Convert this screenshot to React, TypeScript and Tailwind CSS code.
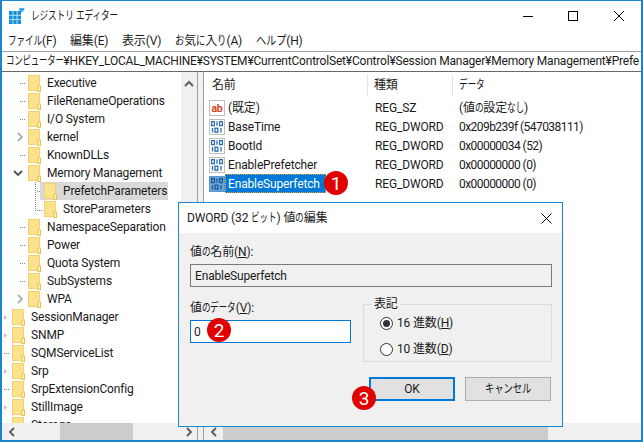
import React from "react";

const FONT = { fontFamily: 'Roboto, "Noto Sans CJK JP", sans-serif' };

type TreeRow = { name: string; level: 0 | 1 | 2; mark: "dots" | "closed" | "open" | "tiny" | "last" | "mid" };

const treeRows: TreeRow[] = [
  { name: "Executive", level: 1, mark: "dots" },
  { name: "FileRenameOperations", level: 1, mark: "dots" },
  { name: "I/O System", level: 1, mark: "dots" },
  { name: "kernel", level: 1, mark: "closed" },
  { name: "KnownDLLs", level: 1, mark: "dots" },
  { name: "Memory Management", level: 1, mark: "open" },
  { name: "PrefetchParameters", level: 2, mark: "mid" },
  { name: "StoreParameters", level: 2, mark: "last" },
  { name: "NamespaceSeparation", level: 1, mark: "dots" },
  { name: "Power", level: 1, mark: "dots" },
  { name: "Quota System", level: 1, mark: "dots" },
  { name: "SubSystems", level: 1, mark: "dots" },
  { name: "WPA", level: 1, mark: "closed" },
  { name: "SessionManager", level: 0, mark: "tiny" },
  { name: "SNMP", level: 0, mark: "tiny" },
  { name: "SQMServiceList", level: 0, mark: "dots" },
  { name: "Srp", level: 0, mark: "tiny" },
  { name: "SrpExtensionConfig", level: 0, mark: "dots" },
  { name: "StillImage", level: 0, mark: "tiny" },
  { name: "Storage", level: 0, mark: "tiny" },
];

const values = [
  { name: "既定", type: "REG_SZ", icon: "ab" },
  { name: "BaseTime", type: "REG_DWORD", data: "0x209b239f (547038111)", icon: "bin" },
  { name: "BootId", type: "REG_DWORD", data: "0x00000034 (52)", icon: "bin" },
  { name: "EnablePrefetcher", type: "REG_DWORD", data: "0x00000000 (0)", icon: "bin" },
  { name: "EnableSuperfetch", type: "REG_DWORD", data: "0x00000000 (0)", icon: "bin", selected: true },
];

// the reference's UI font has narrow kana, the installed CJK font doesn't
function Kana({ children, scale = 0.72 }: { children: string; scale?: number }) {
  const n = Array.from(children).length;
  return (
    <span
      className="inline-block origin-left whitespace-nowrap"
      style={{ transform: `scaleX(${scale})`, marginRight: -n * 12 * (1 - scale) }}
    >
      {children}
    </span>
  );
}

function Folder() {
  return (
    <svg width="13" height="17" viewBox="0 0 13 17" className="shrink-0">
      <rect x="0.5" y="0.5" width="11" height="15" fill="#fde28e" stroke="#f1d26c" />
      <rect x="10" y="11" width="2.5" height="5.5" fill="#fff3c4" stroke="#e8c24f" strokeWidth="1" />
    </svg>
  );
}

function Mark({ level, mark }: { level: number; mark: TreeRow["mark"] }) {
  const w = level === 0 ? 10 : level === 1 ? 26 : 42;
  const dot = "#808080";
  return (
    <svg width={w} height="18" className="shrink-0">
      {mark === "dots" &&
        [0, 2, 4].map((d) => <rect key={d} x={w - 8 + d} y="9" width="1" height="1" fill={dot} />)}
      {mark === "closed" && <path d={`M${w - 10} 5l4 4-4 4`} fill="none" stroke="#b0b0b0" strokeWidth="1.8" />}
      {mark === "open" && <path d={`M${w - 14} 7l4 4 4-4`} fill="none" stroke="#505050" strokeWidth="1.8" />}
      {mark === "tiny" && <path d={`M${w - 8} 7l3 2.5-3 2.5z`} fill="#c0c0c0" />}
      {(mark === "mid" || mark === "last") && (
        <g fill={dot}>
          {(mark === "mid" ? [0, 2, 4, 6, 8, 10, 12, 14, 16] : [0, 2, 4, 6, 8, 10]).map((y) => (
            <rect key={y} x={w - 9} y={y} width="1" height="1" />
          ))}
          {[2, 4, 6].map((d) => (
            <rect key={d} x={w - 9 + d} y={mark === "mid" ? 9 : 10} width="1" height="1" />
          ))}
        </g>
      )}
    </svg>
  );
}

function ValueIcon({ kind, selected }: { kind: string; selected?: boolean }) {
  if (kind === "ab") {
    return (
      <svg width="16" height="16" viewBox="0 0 16 16" className="shrink-0">
        <rect x="0.5" y="0.5" width="15" height="15" fill="#fff" stroke="#bdbdbd" />
        <text x="8" y="11.5" textAnchor="middle" fontSize="10.5" fontWeight="700" fill="#d6451f" style={FONT}>
          ab
        </text>
      </svg>
    );
  }
  const c = selected ? "#1b5c96" : "#2a6db0";
  return (
    <svg width="16" height="16" viewBox="0 0 16 16" className="shrink-0">
      <rect x="0.5" y="0.5" width="15" height="15" fill={selected ? "#6aa5dc" : "#fff"} stroke={selected ? "#5c96cc" : "#bdbdbd"} />
      <g fill="none" stroke={c} strokeWidth="1.3">
        <rect x="2.6" y="2.6" width="2.8" height="4" />
        <path d="M8 2.5v4.2" />
        <rect x="10.6" y="2.6" width="2.8" height="4" />
        <path d="M3.5 9v4.4" />
        <rect x="6" y="9.2" width="2.8" height="4" />
        <path d="M12 9v4.4" />
      </g>
    </svg>
  );
}

function Badge({ n, className }: { n: number; className: string }) {
  return (
    <span
      className={`absolute flex h-6 w-6 items-center justify-center rounded-full bg-[#e00000] text-[19px] leading-none text-white ${className}`}
    >
      {n}
    </span>
  );
}

function Chevron({ d }: { d: string }) {
  return (
    <svg width="10" height="10" viewBox="0 0 10 10" className="shrink-0">
      <path d={d} fill="none" stroke="#606060" strokeWidth="2" />
    </svg>
  );
}

function Radio({ checked, label, mnemonic }: { checked?: boolean; label: string; mnemonic: string }) {
  return (
    <div className="flex h-[26px] items-center gap-[4px]">
      <span className="flex h-[13px] w-[13px] items-center justify-center rounded-full border border-[#333] bg-white">
        {checked && <span className="h-[7px] w-[7px] rounded-full bg-[#333]" />}
      </span>
      <span>
        {label}(<span className="underline">{mnemonic}</span>)
      </span>
    </div>
  );
}

export default function App() {
  return (
    <div
      style={FONT}
      className="flex h-[442px] w-[643px] flex-col overflow-hidden border-x-2 border-t border-b-2 border-[#1a86d0] bg-white text-[12px] tracking-[-0.15px] text-[#1a1a1a]"
    >
      {/* title bar */}
      <div className="flex h-[30px] shrink-0 items-center pl-[7px]">
        <svg width="16" height="16" viewBox="0 0 16 16" className="shrink-0">
          <rect x="0" y="3" width="12" height="13" fill="#1490d8" />
          <path d="M4 3v13M8 3v13M0 7.3h12M0 11.6h12" stroke="#d5eefb" strokeWidth="0.8" />
          <rect x="11" y="0" width="5" height="5" fill="#3aa8e0" transform="rotate(45 13.5 2.5) scale(0.9)" />
        </svg>
        <span className="ml-[6px] whitespace-pre">
          <Kana>レジストリ</Kana> <Kana>エディター</Kana>
        </span>
        <div className="ml-auto flex items-center">
          <span className="h-px w-[10px] bg-black" />
          <span className="ml-[35px] h-[10px] w-[10px] border border-black" />
          <svg width="10" height="10" viewBox="0 0 10 10" className="ml-[36px] mr-[17px]">
            <path d="M0 0l10 10M10 0L0 10" stroke="#000" strokeWidth="1" />
          </svg>
        </div>
      </div>

      {/* menu */}
      <div className="flex h-[20px] shrink-0 items-center whitespace-nowrap pl-[6px]">
        <span className="w-[62px]">
          <Kana>ファイル</Kana>(F)
        </span>
        <span className="w-[52px]">編集(E)</span>
        <span className="w-[53px]">表示(V)</span>
        <span className="w-[81px]">
          <Kana scale={0.78}>お</Kana>気<Kana scale={0.78}>に</Kana>入<Kana scale={0.78}>り</Kana>(A)
        </span>
        <span>
          <Kana scale={0.85}>ヘルプ</Kana>(H)
        </span>
      </div>

      {/* address bar */}
      <div className="h-[21px] shrink-0 overflow-hidden whitespace-nowrap border-y border-t-[#a0a0a0] border-b-[#696969] pl-[4px] leading-[19px] tracking-[-0.2px]">
        <Kana scale={0.7}>コンピューター</Kana>¥HKEY_LOCAL_MACHINE¥SYSTEM¥CurrentControlSet¥Control¥Session Manager¥Memory Management¥Prefe
      </div>

      {/* panes */}
      <div className="flex min-h-0 flex-1">
        <div className="flex w-[196px] shrink-0 flex-col border-r border-[#a0a0a0]">
          <div className="flex min-h-0 flex-1">
            <div className="min-w-0 flex-1 overflow-hidden pt-[2px]">
              {treeRows.map((r) => (
                <div key={r.name} className="flex h-[18px] items-center whitespace-nowrap">
                  <Mark level={r.level} mark={r.mark} />
                  <div
                    className={`flex h-[18px] items-center ${
                      r.name === "PrefetchParameters" ? "w-[128px] bg-[#d9d9d9] pl-[4px] -ml-[4px]" : ""
                    }`}
                  >
                    <Folder />
                    <span className="ml-[6px]">{r.name}</span>
                  </div>
                </div>
              ))}
            </div>
            <div className="flex w-[16px] shrink-0 justify-center bg-[#f0f0f0] pt-[7px]">
              <Chevron d="M1 7l4-4 4 4" />
            </div>
          </div>
          <div className="flex h-[17px] shrink-0 items-center bg-[#f0f0f0] pl-[5px] pr-[3px]">
            <Chevron d="M7 1L3 5l4 4" />
            <span className="ml-[43px] h-full w-[73px] bg-[#cdcdcd]" />
            <span className="ml-auto">
              <Chevron d="M3 1l4 4-4 4" />
            </span>
          </div>
        </div>

        <div className="w-[5px] shrink-0 bg-[#f0f0f0]" />

        <div className="flex min-w-0 flex-1 flex-col border-l border-[#a0a0a0]">
          <div className="min-h-0 flex-1">
            <div className="flex h-[26px] items-center">
              <span className="flex h-[22px] w-[164px] items-center border-r border-[#e5e5e5] pl-[8px]">名前</span>
              <span className="flex h-[22px] w-[85px] items-center border-r border-[#e5e5e5] pl-[6px]">種類</span>
              <span className="pl-[6px]">
                <Kana>データ</Kana>
              </span>
            </div>
            {values.map((v) => (
              <div key={v.name} className="flex h-[19px] items-center">
                <div className="flex w-[164px] items-center pl-[5px]">
                  <ValueIcon kind={v.icon} selected={v.selected} />
                  <span
                    className={`flex h-[19px] items-center ${
                      v.selected
                        ? "border border-dotted border-[#e8a040] bg-[#0078d7] pl-[2px] pr-[5px] text-white"
                        : "px-[3px]"
                    }`}
                  >
                    {v.icon === "ab" ? `(${v.name})` : v.name}
                  </span>
                </div>
                <span className="w-[85px] pl-[7px]">{v.type}</span>
                <span className="pl-[6px] tracking-[-0.55px]">
                  {v.data ?? (
                    <span className="tracking-[-0.15px]">
                      (値<Kana>の</Kana>設定<Kana>なし</Kana>)
                    </span>
                  )}
                </span>
              </div>
            ))}
          </div>
          <div className="flex h-[17px] shrink-0 items-center bg-[#f0f0f0] pl-[5px]">
            <Chevron d="M7 1L3 5l4 4" />
            <span className="ml-[4px] h-full w-[325px] bg-[#cdcdcd]" />
          </div>
        </div>
      </div>

      {/* badge on the list */}
      <Badge n={1} className="left-[324px] top-[171px]" />

      {/* dialog */}
      <div className="absolute left-[178px] top-[202px] flex h-[225px] w-[385px] flex-col border border-[#1a86d0] bg-[#f0f0f0]">
        <div className="flex h-[30px] shrink-0 items-center bg-white pl-[8px] pr-[10px]">
          <span>
            DWORD (32 <Kana>ビット</Kana>) 値<Kana>の</Kana>編集
          </span>
          <svg width="11" height="11" viewBox="0 0 11 11" className="ml-auto">
            <path d="M0.5 0.5l10 10M10.5 0.5l-10 10" stroke="#000" strokeWidth="1" />
          </svg>
        </div>
        <div className="flex flex-1 flex-col pl-[11px] pr-[10px] pt-[10px]">
          <div>
            値<Kana>の</Kana>名前(<span className="underline">N</span>):
          </div>
          <div className="mt-[3px] flex h-[23px] items-center border border-[#7a7a7a] pl-[4px]">EnableSuperfetch</div>
          <div className="mt-[10px] flex">
            <div className="w-[161px] pt-[2px]">
              <div>
                値<Kana>の</Kana>
                <Kana>データ</Kana>(<span className="underline">V</span>):
              </div>
              <div className="mt-[3px] flex h-[23px] items-center border border-[#0078d7] bg-white pl-[3px]">0</div>
            </div>
            <fieldset className="ml-[12px] h-[65px] flex-1 border border-[#dcdcdc] pl-[16px]">
              <legend className="-ml-[8px] px-[2px] leading-[14px]">表記</legend>
              <div className="-mt-[1px]">
                <Radio checked label="16 進数" mnemonic="H" />
                <Radio label="10 進数" mnemonic="D" />
              </div>
            </fieldset>
          </div>
          <div className="mt-[15px] flex justify-end gap-[10px] pr-px">
            <button className="h-[24px] w-[86px] border-2 border-[#0078d7] bg-[#e1e1e1]">OK</button>
            <button className="h-[24px] w-[86px] border border-[#adadad] bg-[#e1e1e1]">
              <Kana scale={0.78}>キャンセル</Kana>
            </button>
          </div>
        </div>
      </div>

      <Badge n={2} className="left-[207px] top-[318px]" />
      <Badge n={3} className="left-[352px] top-[386px]" />
    </div>
  );
}
